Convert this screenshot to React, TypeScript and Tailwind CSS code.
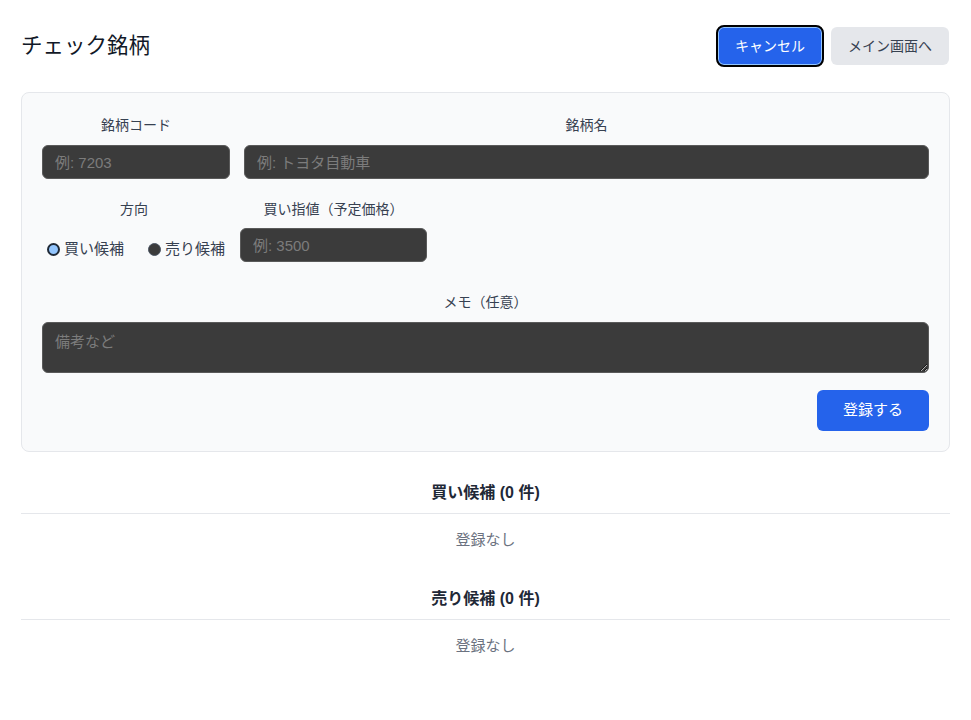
import React from 'react';

const font = { fontFamily: '"Liberation Sans", "Noto Sans CJK JP", sans-serif' };

const inputCls =
  "h-[34px] w-full rounded-md border border-[#5a5a5a] bg-[#3b3b3b] px-3 text-[15px] text-gray-100 placeholder:text-[#7c7c7c] outline-none";

const Section: React.FC<{ title: string; first?: boolean }> = ({ title, first }) => (
  <div className={first ? "mt-[30px]" : "mt-[22px]"}>
    <h3 className="border-b border-[#e5e7eb] pb-[9px] text-center text-[16px] font-bold leading-[22px] text-[#1f2937]">
      {title}
    </h3>
    <p className="py-[15px] text-center text-[15px] leading-[22px] text-[#6b7280]">登録なし</p>
  </div>
);

const App: React.FC = () => {
  return (
    <div className="min-h-screen bg-white px-[21px] pt-[25px]" style={font}>
      <div className="flex items-center justify-between">
        <h1 className="text-[21.5px] text-[#111827] leading-7">チェック銘柄</h1>
        <div className="flex items-center gap-[7px] pr-[1px]">
          <button className="h-[42px] w-[108px] rounded-lg border-2 border-black bg-[#2563eb] text-[14px] text-white shadow-[inset_0_0_0_1px_#93c5fd]">
            キャンセル
          </button>
          <button className="h-[38px] w-[118px] rounded-md bg-[#e5e7eb] text-[14px] text-[#374151]">
            メイン画面へ
          </button>
        </div>
      </div>

      <div className="mt-[25px] rounded-lg border border-[#e5e7eb] bg-[#f9fafb] px-[20px] pt-[22px] pb-[20px]">
        <div className="flex gap-[14px]">
          <div className="w-[188px]">
            <label className="mb-[10px] block text-center text-[14px] leading-5 text-[#374151]">銘柄コード</label>
            <input className={inputCls} placeholder="例: 7203" />
          </div>
          <div className="flex-1">
            <label className="mb-[10px] block text-center text-[14px] leading-5 text-[#374151]">銘柄名</label>
            <input className={inputCls} placeholder="例: トヨタ自動車" />
          </div>
        </div>

        <div className="mt-[20px] flex gap-[14px]">
          <div className="w-[184px]">
            <label className="mb-[9px] block text-center text-[14px] leading-5 text-[#374151]">方向</label>
            <div className="flex h-[34px] items-center gap-[24px] pt-[8px] pl-[5px] text-[15px] text-[#374151]">
              <label className="flex items-center gap-[4px]">
                <span className="h-[13px] w-[13px] rounded-full border-2 border-[#1f2937] bg-[#93c5fd]" />
                買い候補
              </label>
              <label className="flex items-center gap-[4px]">
                <span className="h-[13px] w-[13px] rounded-full border border-[#4b5563] bg-[#3b3b3b]" />
                売り候補
              </label>
            </div>
          </div>
          <div className="w-[187px]">
            <label className="mb-[9px] block text-center text-[14px] leading-5 text-[#374151]">買い指値（予定価格）</label>
            <input className={inputCls} placeholder="例: 3500" />
          </div>
        </div>

        <div className="mt-[30px]">
          <label className="mb-[10px] block text-center text-[14px] leading-5 text-[#374151]">メモ（任意）</label>
          <textarea
            className="block h-[51px] w-full resize-y rounded-md border border-[#5a5a5a] bg-[#3b3b3b] px-3 py-[8px] text-[15px] text-gray-100 placeholder:text-[#7c7c7c] outline-none"
            placeholder="備考など"
          />
        </div>

        <div className="mt-[17px] flex justify-end">
          <button className="h-[41px] w-[112px] rounded-md bg-[#2563eb] text-[15px] text-white">登録する</button>
        </div>
      </div>

      <Section title="買い候補 (0 件)" first />
      <Section title="売り候補 (0 件)" />
    </div>
  );
};

export default App;
